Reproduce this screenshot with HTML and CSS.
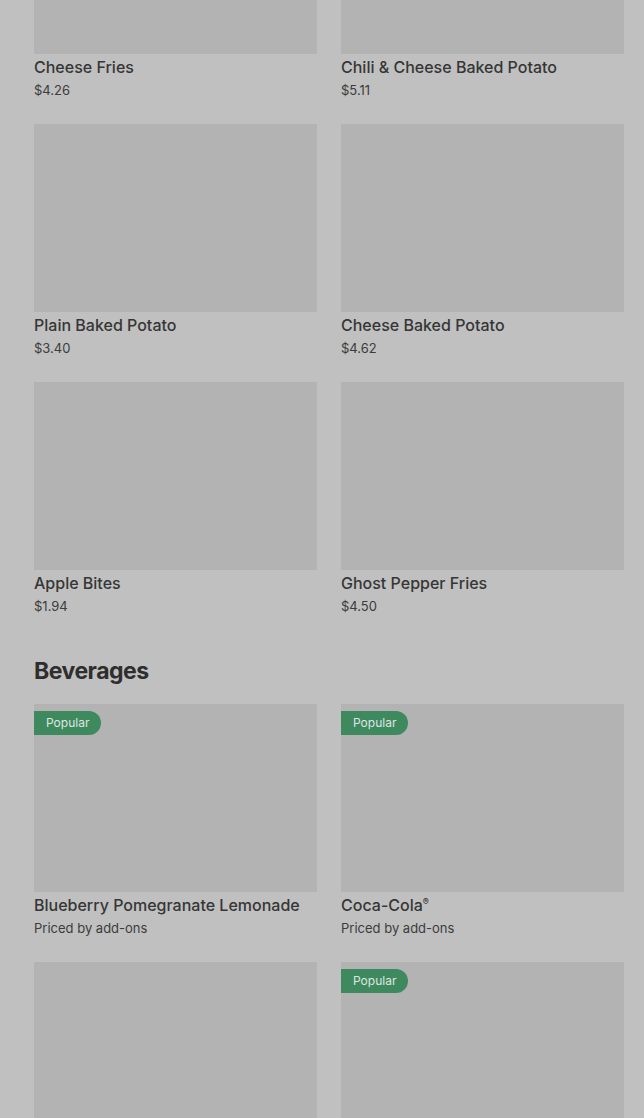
FILE: index.html
```html
<!DOCTYPE html>
<html>
<head>
    <title>Menu</title>
    <link rel="stylesheet" href="styles.css">
</head>
<body>
    <div class="menu">
        <section class="section">
            <div class="item-grid">
                <div class="item">
                    <div class="item-image"></div>
                    <div class="item-name">Cheese Fries</div>
                    <div class="item-price">$4.26</div>
                </div>
                <div class="item">
                    <div class="item-image"></div>
                    <div class="item-name">Chili &amp; Cheese Baked Potato</div>
                    <div class="item-price">$5.11</div>
                </div>
                <div class="item">
                    <div class="item-image"></div>
                    <div class="item-name">Plain Baked Potato</div>
                    <div class="item-price">$3.40</div>
                </div>
                <div class="item">
                    <div class="item-image"></div>
                    <div class="item-name">Cheese Baked Potato</div>
                    <div class="item-price">$4.62</div>
                </div>
                <div class="item">
                    <div class="item-image"></div>
                    <div class="item-name">Apple Bites</div>
                    <div class="item-price">$1.94</div>
                </div>
                <div class="item">
                    <div class="item-image"></div>
                    <div class="item-name">Ghost Pepper Fries</div>
                    <div class="item-price">$4.50</div>
                </div>
            </div>
        </section>

        <section class="section">
            <h2 class="section-title">Beverages</h2>
            <div class="item-grid">
                <div class="item">
                    <div class="item-image"><span class="badge">Popular</span></div>
                    <div class="item-name">Blueberry Pomegranate Lemonade</div>
                    <div class="item-price">Priced by add-ons</div>
                </div>
                <div class="item">
                    <div class="item-image"><span class="badge">Popular</span></div>
                    <div class="item-name">Coca-Cola<sup>®</sup></div>
                    <div class="item-price">Priced by add-ons</div>
                </div>
                <div class="item">
                    <div class="item-image"></div>
                </div>
                <div class="item">
                    <div class="item-image"><span class="badge">Popular</span></div>
                </div>
            </div>
        </section>
    </div>
</body>
</html>
```

FILE: styles.css
```css
body {
    margin: 0;
    font-family: Inter, "Liberation Sans", sans-serif;
    background-color: #c0c0c0;
    color: #2e2e2e;
    overflow: hidden;
}
.menu {
    /* page is scrolled down */
    margin-top: -134px;
    padding: 0 20px 0 34px;
}
.section {
    margin-bottom: 38px;
}
.section-title {
    margin: 0 0 17px;
    font-size: 23px;
    line-height: 32px;
    font-weight: 700;
    letter-spacing: -0.5px;
    color: #2e2e2e;
}
.item-grid {
    display: grid;
    grid-template-columns: 1fr 1fr;
    column-gap: 24px;
    row-gap: 23px;
}
.item-image {
    position: relative;
    height: 188px;
    background-color: #b3b3b3;
}
.badge {
    position: absolute;
    top: 7px;
    left: 0;
    height: 24px;
    line-height: 24px;
    padding: 0 12px;
    border-radius: 0 12px 12px 0;
    background-color: #3e8a5e;
    color: #dfe6e1;
    font-size: 12px;
}
.item-name {
    margin-top: 1px;
    font-size: 16px;
    line-height: 24px;
    font-weight: 500;
    color: #363636;
}
.item-name sup {
    font-size: 9px;
    line-height: 0;
}
.item-price {
    font-size: 13px;
    line-height: 22px;
    color: #3c3c3c;
}
```
